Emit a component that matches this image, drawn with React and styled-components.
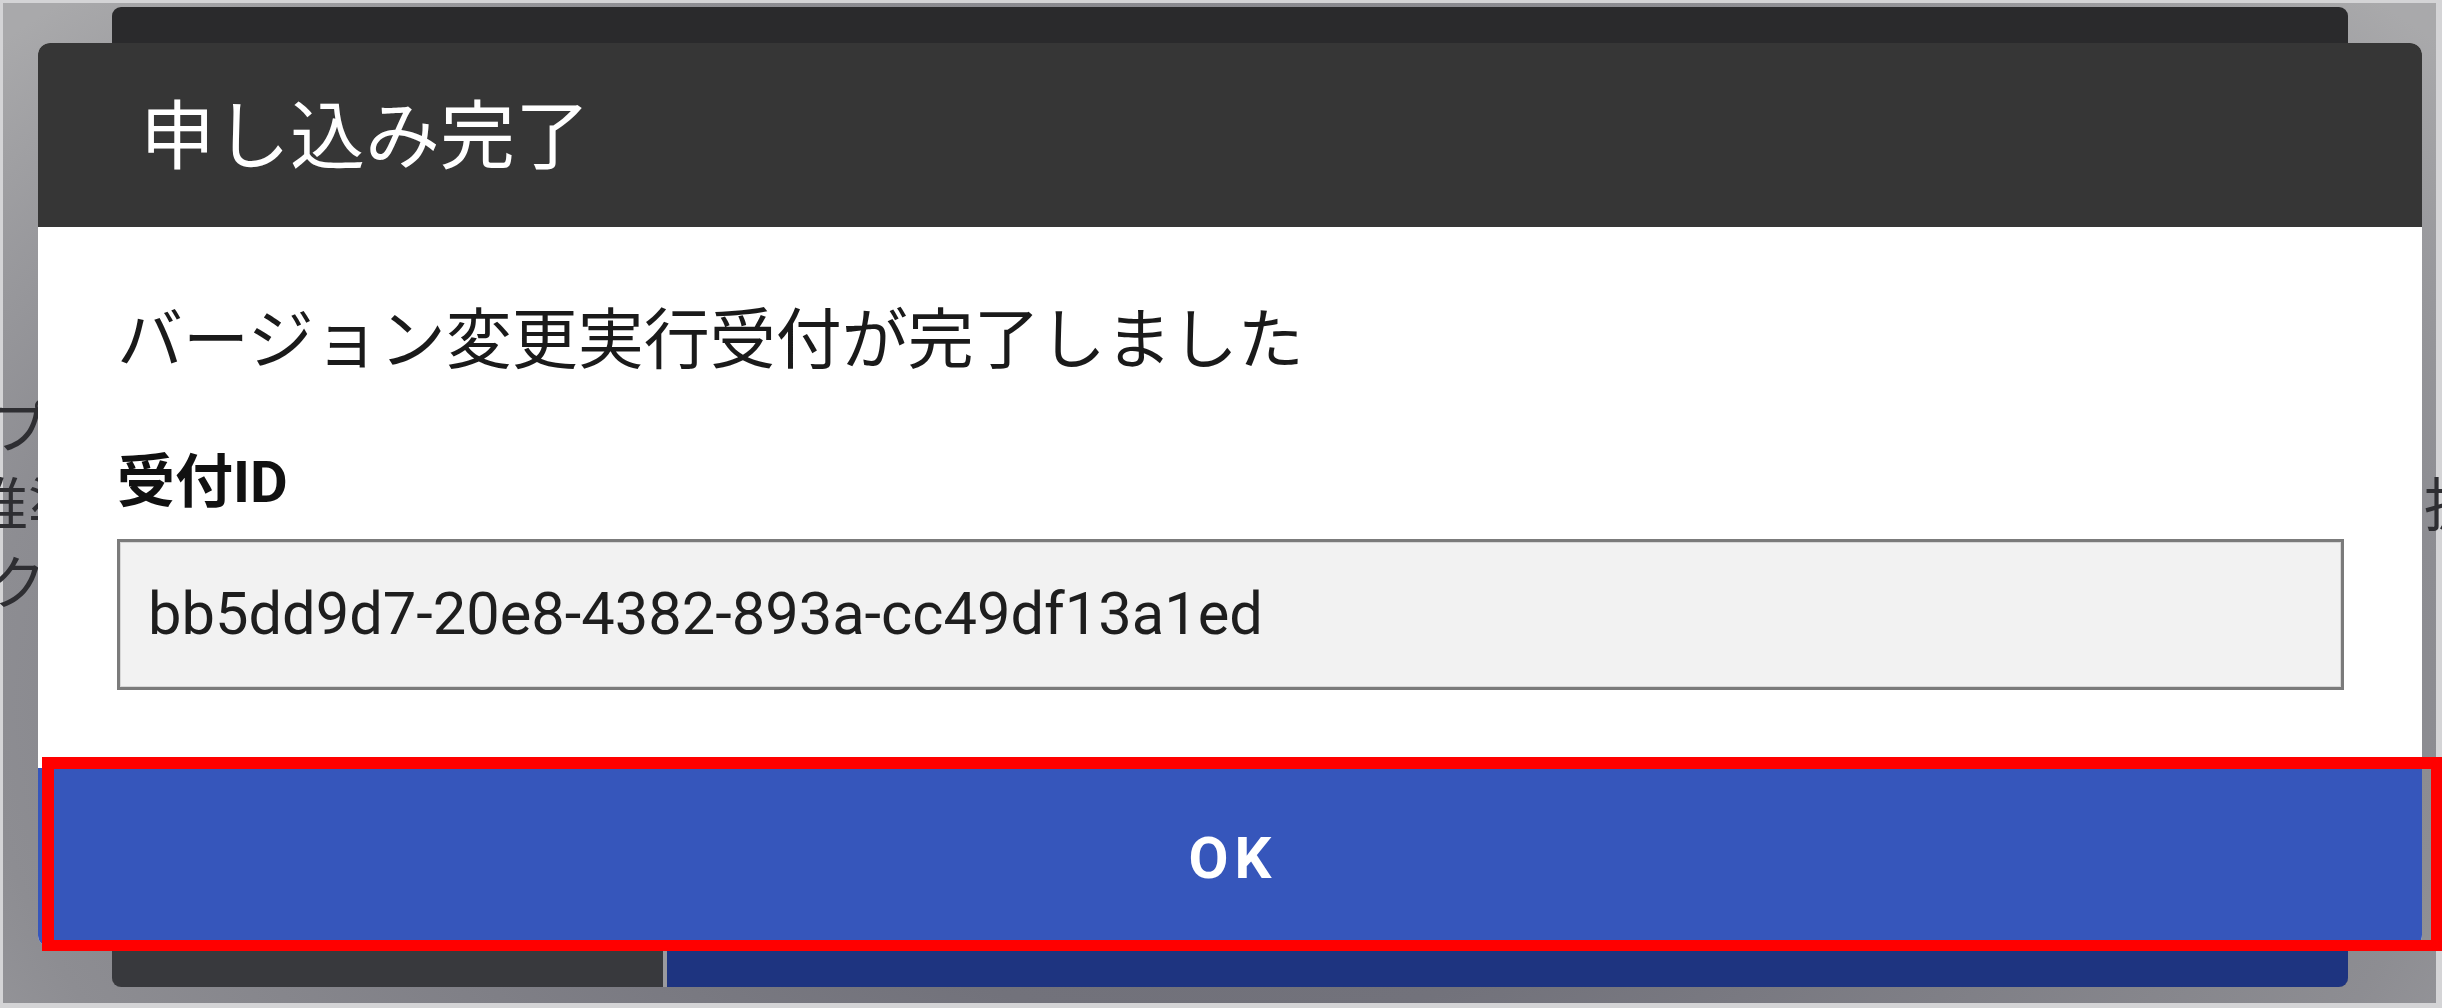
import React from "react";
import styled, { createGlobalStyle } from "styled-components";

const GlobalStyle = createGlobalStyle`
  html, body {
    margin: 0;
    padding: 0;
    background: #d4d4d6;
  }
  * { box-sizing: border-box; }
`;

const FONT = `Roboto, "Noto Sans CJK JP", "Noto Sans", sans-serif`;

const Page = styled.div`
  position: relative;
  width: 2442px;
  height: 1008px;
  padding: 3px 6px 5px 3px;
  overflow: hidden;
  background: #d4d4d6;
  font-family: ${FONT};
`;

const Overlay = styled.div`
  position: relative;
  width: 100%;
  height: 100%;
  background: radial-gradient(
    1300px 800px at 50% 700px,
    #6c6c76 0%,
    #72727b 40%,
    #8d8d92 95%,
    #a9a9ab 125%
  );
`;

/* page content hidden behind the modal, only its edges peek out */
const UnderlyingText = styled.div`
  position: absolute;
  left: ${(p) => p.$left}px;
  top: ${(p) => p.$top}px;
  display: flex;
  flex-direction: column;
  font-size: 58px;
  line-height: 78px;
  color: #2e2e32;
  white-space: nowrap;
`;

const UnderLine = styled.div`
  margin-left: ${(p) => p.$shift || 0}px;
`;

const BackDialog = styled.div`
  position: absolute;
  left: 109px;
  top: 4px;
  width: 2236px;
  height: 980px;
  border-radius: 9px;
  overflow: hidden;
  background: #2a2a2c;
  display: flex;
  flex-direction: column;
  justify-content: flex-end;
`;

const BackButtonRow = styled.div`
  height: 140px;
  display: flex;
  gap: 4px;
  background: #9a9a9e;
`;

const BackButton = styled.div`
  flex: ${(p) => (p.$primary ? "1" : "0 0 551px")};
  background: ${(p) => (p.$primary ? "#1e3480" : "#38393d")};
`;

const Dialog = styled.div`
  position: absolute;
  left: 35px;
  top: 40px;
  width: 2384px;
  height: 904px;
  border-radius: 12px;
  overflow: hidden;
  display: flex;
  flex-direction: column;
  background: #ffffff;
`;

const DialogHeader = styled.div`
  height: 184px;
  padding: 57px 0 52px 102px;
  background: #363636;
  display: flex;
  align-items: flex-start;
`;

const DialogTitle = styled.h2`
  margin: 0;
  font-family: ${FONT};
  font-size: 75px;
  line-height: 1;
  font-weight: 400;
  color: #ffffff;
`;

const DialogBody = styled.div`
  padding: 81px 78px 78px 79px;
  display: flex;
  flex-direction: column;
  background: #ffffff;
`;

const Message = styled.p`
  margin: 0 0 79px 0;
  font-size: 66px;
  line-height: 1;
  font-weight: 400;
  color: #1a1a1a;
  white-space: nowrap;
`;

const FieldLabel = styled.div`
  margin-bottom: 28px;
  font-size: 58px;
  line-height: 1;
  font-weight: 700;
  color: #111111;
`;

const FieldValue = styled.div`
  height: 151px;
  padding-left: 28px;
  display: flex;
  align-items: center;
  background: #f2f2f2;
  border: 3px solid #7b7b7b;
  box-shadow: inset 0 0 0 1px #d8d8d8;
  font-size: 59.6px;
  line-height: 1;
  color: #1e1e1e;
  white-space: nowrap;
`;

const OkButton = styled.button`
  flex: 1;
  border: none;
  margin: 0;
  padding: 0 0 0 6px;
  background: #3656bb;
  color: #ffffff;
  font-family: ${FONT};
  font-size: 58px;
  font-weight: 700;
  letter-spacing: 6px;
  line-height: 1;
  display: flex;
  align-items: center;
  justify-content: center;
  cursor: pointer;
`;

const Highlight = styled.div`
  position: absolute;
  left: 39px;
  top: 754px;
  width: 2400px;
  height: 194px;
  border: 12px solid #ff0000;
  border-bottom-width: 11px;
  border-right-width: 11px;
  pointer-events: none;
`;

export default function App() {
  return (
    <>
      <GlobalStyle />
      <Page>
        <Overlay>
          <UnderlyingText $left={-15} $top={386}>
            <UnderLine $shift={3}>プ</UnderLine>
            <UnderLine $shift={-18}>推準</UnderLine>
            <UnderLine>ク</UnderLine>
          </UnderlyingText>
          <UnderlyingText $left={2421} $top={464}>
            <UnderLine>拡</UnderLine>
          </UnderlyingText>

          <BackDialog>
            <BackButtonRow>
              <BackButton />
              <BackButton $primary />
            </BackButtonRow>
          </BackDialog>

          <Dialog>
            <DialogHeader>
              <DialogTitle>申し込み完了</DialogTitle>
            </DialogHeader>
            <DialogBody>
              <Message>バージョン変更実行受付が完了しました</Message>
              <FieldLabel>受付ID</FieldLabel>
              <FieldValue>bb5dd9d7-20e8-4382-893a-cc49df13a1ed</FieldValue>
            </DialogBody>
            <OkButton>OK</OkButton>
          </Dialog>

          <Highlight />
        </Overlay>
      </Page>
    </>
  );
}
